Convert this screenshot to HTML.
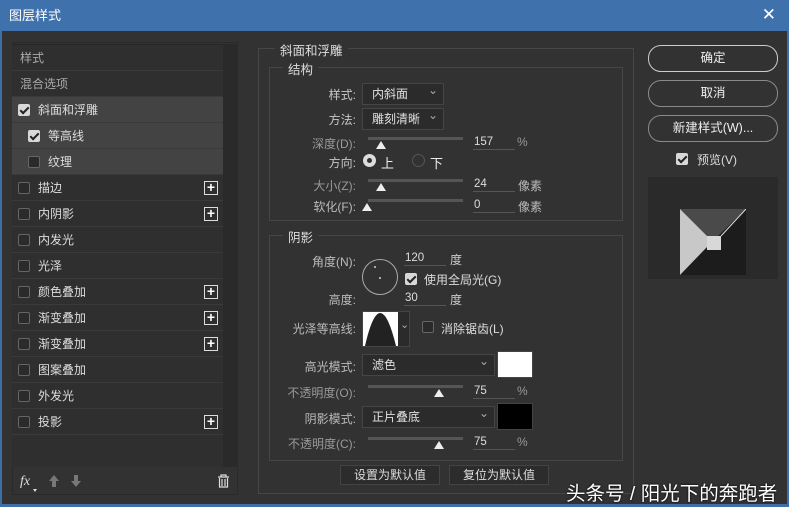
<!DOCTYPE html>
<html><head><meta charset="utf-8"><style>
*{box-sizing:border-box;margin:0;padding:0}
body{width:789px;height:507px;background:#3d6ea8;font-family:"Liberation Sans","Noto Sans CJK SC",sans-serif;font-size:12px;color:#d6d6d6;position:relative;overflow:hidden}
.a{position:absolute}
.title{left:0;top:0;width:789px;height:31px;background:#3f72ad;color:#fff;font-size:13px;line-height:31px;padding-left:9px}
.body{left:2px;top:31px;width:785px;height:473px;background:#323232}
.list{left:12px;top:44px;width:211px;height:423px;background:#2f2f2f;border-top:1px solid #262626}
.sb{left:223px;top:44px;width:14px;height:423px;background:#2a2a2a}
.it{position:absolute;left:0;width:211px;height:26px;border-bottom:1px solid #3a3a3a;line-height:26px;font-size:12px;color:#ddd}
.sel{background:#434343}
.cb{position:absolute;width:12px;height:12px;border:1px solid #666;background:#2a2a2a;border-radius:2px}
.cbc{background:#d8d8d8;border-color:#d8d8d8}
.cbc:after{content:"";position:absolute;left:3px;top:0px;width:3px;height:7px;border:solid #222;border-width:0 2px 2px 0;transform:rotate(45deg)}
.plus{position:absolute;right:5px;top:6px;width:14px;height:14px;border:1px solid #ddd;color:#fff;font-size:14px;line-height:11px;text-align:center;font-weight:bold}
.grp{border:1px solid #464646}
.lbl{position:absolute;background:#323232;padding:0 5px;color:#ddd;font-size:12.5px}
.r{position:absolute;text-align:right;color:#c8c8c8;font-size:12px}
.dd{position:absolute;height:22px;border:1px solid #454545;background:#2b2b2b;color:#e0e0e0;line-height:20px;padding-left:9px;font-size:12px}
.dd:after{content:"⌄";position:absolute;right:5px;top:-4px;color:#aaa;font-size:12px}
.sl{position:absolute;height:3px;background:#555;width:95px}
.th{position:absolute;width:0;height:0;border-left:5px solid transparent;border-right:5px solid transparent;border-bottom:8px solid #eee}
.num{position:absolute;border-bottom:1px solid #555;width:42px;color:#ddd;font-size:11.5px;padding-left:1px;line-height:14px}
.btn{position:absolute;left:648px;width:130px;height:27px;border:1px solid #8a8a8a;border-radius:13px;text-align:center;line-height:25px;color:#eee;font-size:12.5px}
.pb{position:absolute;height:20px;border:1px solid #444;background:#2c2c2c;text-align:center;line-height:18px;color:#ddd}
</style></head><body>
<div class="a title">图层样式</div>
<div class="a" style="right:13px;top:5px;color:#fff;font-size:17px">✕</div>
<div class="a body"></div>
<div class="a" style="left:12px;top:42px;width:226px;height:453px;border:1px solid #2a2a2a"></div>
<div class="a list">
<div class="it" style="top:0px;padding-left:8px;color:#aaa">样式</div>
<div class="it" style="top:26px;padding-left:8px;color:#aaa">混合选项</div>
<div class="it sel" style="top:52px;padding-left:26px"><span class="cb cbc" style="left:6px;top:7px"></span>斜面和浮雕</div>
<div class="it sel" style="top:78px;padding-left:36px"><span class="cb cbc" style="left:16px;top:7px"></span>等高线</div>
<div class="it sel" style="top:104px;padding-left:36px"><span class="cb" style="left:16px;top:7px"></span>纹理</div>
<div class="it" style="top:130px;padding-left:26px"><span class="cb" style="left:6px;top:7px"></span>描边<span class="plus">+</span></div>
<div class="it" style="top:156px;padding-left:26px"><span class="cb" style="left:6px;top:7px"></span>内阴影<span class="plus">+</span></div>
<div class="it" style="top:182px;padding-left:26px"><span class="cb" style="left:6px;top:7px"></span>内发光</div>
<div class="it" style="top:208px;padding-left:26px"><span class="cb" style="left:6px;top:7px"></span>光泽</div>
<div class="it" style="top:234px;padding-left:26px"><span class="cb" style="left:6px;top:7px"></span>颜色叠加<span class="plus">+</span></div>
<div class="it" style="top:260px;padding-left:26px"><span class="cb" style="left:6px;top:7px"></span>渐变叠加<span class="plus">+</span></div>
<div class="it" style="top:286px;padding-left:26px"><span class="cb" style="left:6px;top:7px"></span>渐变叠加<span class="plus">+</span></div>
<div class="it" style="top:312px;padding-left:26px"><span class="cb" style="left:6px;top:7px"></span>图案叠加</div>
<div class="it" style="top:338px;padding-left:26px"><span class="cb" style="left:6px;top:7px"></span>外发光</div>
<div class="it" style="top:364px;padding-left:26px"><span class="cb" style="left:6px;top:7px"></span>投影<span class="plus">+</span></div>
</div>
<div class="a sb"></div>
<div class="a" style="left:20px;top:474px;font-style:italic;color:#ddd;font-size:14px;font-family:'Liberation Serif',serif">fx</div>
<div class="a" style="left:33px;top:489px;width:0;height:0;border-left:2px solid transparent;border-right:2px solid transparent;border-top:3px solid #ddd"></div>
<svg class="a" style="left:45px;top:474px" width="45" height="14"><path d="M4 7l5-6 5 6h-3v6h-4v-6z M26 7h3v-6h4v6h3l-5 6z" fill="#777"/></svg>
<svg class="a" style="left:217px;top:474px" width="13" height="14"><path d="M1 3h11M4 3v-2h5v2M2.5 4v9h8v-9M5 5v7M8 5v7" stroke="#ddd" fill="none" stroke-width="1.2"/></svg>

<div class="a grp" style="left:258px;top:48px;width:376px;height:446px"></div>
<div class="lbl" style="left:275px;top:40px">斜面和浮雕</div>
<div class="a grp" style="left:269px;top:67px;width:354px;height:154px"></div>
<div class="lbl" style="left:283px;top:59px">结构</div>
<div class="r" style="left:300px;top:86px;width:56px">样式:</div>
<div class="dd" style="left:362px;top:83px;width:82px">内斜面</div>
<div class="r" style="left:300px;top:111px;width:56px">方法:</div>
<div class="dd" style="left:362px;top:108px;width:82px">雕刻清晰</div>
<div class="r" style="left:290px;top:135px;width:66px;color:#999">深度(D):</div>
<div class="sl" style="left:368px;top:137px"></div><div class="th" style="left:376px;top:141px"></div>
<div class="num" style="left:473px;top:135px">157</div><div class="a" style="left:517px;top:135px;color:#999">%</div>
<div class="r" style="left:300px;top:154px;width:56px">方向:</div>
<div class="a" style="left:363px;top:154px;width:13px;height:13px;border-radius:50%;background:#ddd"></div>
<div class="a" style="left:367px;top:158px;width:5px;height:5px;border-radius:50%;background:#333"></div>
<div class="a" style="left:381px;top:153px;color:#eee;font-size:13px">上</div>
<div class="a" style="left:412px;top:154px;width:13px;height:13px;border-radius:50%;border:1px solid #555"></div>
<div class="a" style="left:430px;top:153px;color:#eee;font-size:13px">下</div>
<div class="r" style="left:290px;top:177px;width:66px;color:#999">大小(Z):</div>
<div class="sl" style="left:368px;top:179px"></div><div class="th" style="left:376px;top:183px"></div>
<div class="num" style="left:473px;top:177px">24</div><div class="a" style="left:518px;top:177px;color:#bbb">像素</div>
<div class="r" style="left:290px;top:198px;width:66px;color:#bbb">软化(F):</div>
<div class="sl" style="left:368px;top:199px"></div><div class="th" style="left:362px;top:203px"></div>
<div class="num" style="left:473px;top:198px">0</div><div class="a" style="left:518px;top:198px;color:#bbb">像素</div>

<div class="a grp" style="left:269px;top:235px;width:354px;height:226px"></div>
<div class="lbl" style="left:283px;top:227px">阴影</div>
<div class="r" style="left:290px;top:253px;width:66px;color:#bbb">角度(N):</div>
<div class="a" style="left:362px;top:259px;width:36px;height:36px;border-radius:50%;border:1px solid #aaa"></div>
<div class="a" style="left:374px;top:266px;width:2px;height:2px;background:#aaa"></div>
<div class="a" style="left:379px;top:277px;width:2px;height:2px;background:#aaa"></div>
<div class="num" style="left:404px;top:251px">120</div><div class="a" style="left:450px;top:251px;color:#ccc">度</div>
<div class="cb cbc" style="left:405px;top:273px"></div>
<div class="a" style="left:424px;top:271px;color:#ddd">使用全局光(G)</div>
<div class="r" style="left:290px;top:291px;width:66px;color:#bbb">高度:</div>
<div class="num" style="left:404px;top:291px">30</div><div class="a" style="left:450px;top:291px;color:#ccc">度</div>
<div class="r" style="left:280px;top:320px;width:76px;color:#bbb">光泽等高线:</div>
<div class="a" style="left:362px;top:311px;width:48px;height:36px;border:1px solid #444;background:#2b2b2b"></div>
<svg class="a" style="left:363px;top:312px" width="35" height="34"><rect width="35" height="34" fill="#fff"/><path d="M2 34 Q17 -32 33 34Z" fill="#222"/></svg>
<div class="a" style="left:400px;top:318px;color:#aaa;font-size:11px">⌄</div>
<div class="cb" style="left:422px;top:321px;border-color:#666"></div>
<div class="a" style="left:441px;top:320px;color:#ddd">消除锯齿(L)</div>
<div class="r" style="left:280px;top:358px;width:76px;color:#bbb">高光模式:</div>
<div class="dd" style="left:362px;top:354px;width:133px">滤色</div>
<div class="a" style="left:497px;top:351px;width:36px;height:27px;background:#fff;border:1px solid #444"></div>
<div class="r" style="left:270px;top:384px;width:86px;color:#999">不透明度(O):</div>
<div class="sl" style="left:368px;top:385px"></div><div class="th" style="left:434px;top:389px"></div>
<div class="num" style="left:473px;top:384px">75</div><div class="a" style="left:517px;top:384px;color:#999">%</div>
<div class="r" style="left:280px;top:410px;width:76px;color:#bbb">阴影模式:</div>
<div class="dd" style="left:362px;top:406px;width:133px">正片叠底</div>
<div class="a" style="left:497px;top:403px;width:36px;height:27px;background:#000;border:1px solid #444"></div>
<div class="r" style="left:270px;top:435px;width:86px;color:#999">不透明度(C):</div>
<div class="sl" style="left:368px;top:437px"></div><div class="th" style="left:434px;top:441px"></div>
<div class="num" style="left:473px;top:435px">75</div><div class="a" style="left:517px;top:435px;color:#999">%</div>
<div class="pb" style="left:340px;top:465px;width:100px">设置为默认值</div>
<div class="pb" style="left:449px;top:465px;width:100px">复位为默认值</div>

<div class="btn" style="top:45px;border-color:#ccc">确定</div>
<div class="btn" style="top:80px">取消</div>
<div class="btn" style="top:115px">新建样式(W)...</div>
<div class="cb cbc" style="left:676px;top:153px"></div>
<div class="a" style="left:697px;top:151px;color:#ddd">预览(V)</div>
<div class="a" style="left:648px;top:177px;width:130px;height:102px;background:#2a2a2a"></div>
<svg class="a" style="left:680px;top:209px" width="66" height="66"><rect width="66" height="66" fill="#1c1c1c"/><polygon points="0,0 66,0 38,27 27,27" fill="#4a4a4a"/><polygon points="0,0 27,27 27,38 0,66" fill="#c8c8c8"/><rect x="27" y="27" width="14" height="14" fill="#d8d8d8"/><line x1="41" y1="27" x2="66" y2="0" stroke="#ddd"/></svg>
<div class="a" style="left:566px;top:477px;color:#fff;font-size:19.5px;text-shadow:0 0 2px #000">头条号 / 阳光下的奔跑者</div>
</body></html>
